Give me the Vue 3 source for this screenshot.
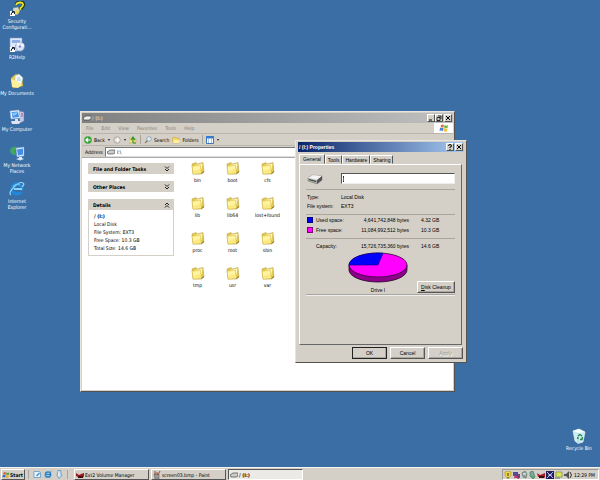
<script setup>
import { onMounted, ref } from 'vue'

const shortcuts = [
  { id: 'security', label: 'Security Configurati...' },
  { id: 'help', label: 'R2Help' },
  { id: 'documents', label: 'My Documents' },
  { id: 'computer', label: 'My Computer' },
  { id: 'network', label: 'My Network Places' },
  { id: 'ie', label: 'Internet Explorer' },
]
const menus = ['File', 'Edit', 'View', 'Favorites', 'Tools', 'Help']
const folders = ['bin', 'boot', 'cfs', 'lib', 'lib64', 'lost+found', 'proc', 'root', 'sbin', 'tmp', 'usr', 'var']
const facts = ['Local Disk', 'File System: EXT3', 'Free Space: 10.3 GB', 'Total Size: 14.6 GB']
const tabs = ['General', 'Tools', 'Hardware', 'Sharing']
const activeTab = ref('General')
const address = ref('I:\\')
const volume = ref('/')
const volumeInput = ref(null)

onMounted(() => {
  volumeInput.value.focus()
  volumeInput.value.select()
})
</script>

<template>
  <div class="screen">
    <main class="desktop">
      <nav class="shortcuts" aria-label="Desktop">
        <a v-for="s in shortcuts" :key="s.id" href="#" class="shortcut">
          <svg class="big" viewBox="0 0 16 16" aria-hidden="true">
            <g v-if="s.id === 'security'">
              <path d="M7 4Q8 1 11 1Q15 1 14.500 4Q14 6 12 7V9" fill="none" stroke="#24350a" stroke-width="3.200" />
              <path d="M7 4Q8 1.500 11 1.500Q14.500 1.500 14 4Q13.500 6 11.500 7V9" fill="none" stroke="#e8e838" stroke-width="1.800" />
              <path d="M4 7L9 6L11 10L8 14L4 13Z" fill="#d8dccb" stroke="#71806b" stroke-width=".5" />
              <circle cx="8" cy="11" r="2" fill="#e6d457" />
              <path d="M1 10H6V15H1Z" fill="#fff" /><path d="M2 14Q2 11 5 11M3 10.500H5.500V13" fill="none" stroke="#123" />
            </g>
            <g v-else-if="s.id === 'help'">
              <path d="M1 1H13V14H1Z" fill="#dce8fa" stroke="#7f9ed0" stroke-width=".6" />
              <path d="M3 3H11V6H3Z" fill="#8fb0e4" />
              <circle cx="11" cy="9.500" r="4.500" fill="#dde6f6" stroke="#8196bd" stroke-width=".7" />
              <path d="M8 6L11 9L15 8" fill="none" stroke="#fff" stroke-width="1.500" /><circle cx="11" cy="9.500" r="1.200" fill="#7b8bcc" />
              <path d="M1 10H6V15H1Z" fill="#fff" /><path d="M2 14Q2 11 5 11M3 10.500H5.500V13" fill="none" stroke="#123" />
            </g>
            <g v-else-if="s.id === 'documents'">
              <path d="M2 5L7 1L13 4L14 13L4 15Z" fill="#e8cc55" stroke="#a5943e" stroke-width=".5" />
              <path d="M6 3L10 1L14 5L12 12L6 10Z" fill="#f4faff" stroke="#9cb5be" stroke-width=".4" />
              <path d="M2 6L8 8L13 12L9 15L3 14Z" fill="#fff09b" /><path d="M8 5H11M8 7H12" stroke="#69b7c9" stroke-width=".7" />
            </g>
            <g v-else-if="s.id === 'computer'">
              <path d="M10 2L15 3V12L11 14Z" fill="#c5c9df" stroke="#6e75a4" stroke-width=".5" />
              <path d="M1 2L10 1L11 9L2 10Z" fill="#eef4ff" stroke="#8eaddb" stroke-width=".5" />
              <path d="M2.500 3L9 2.500L10 8L3.500 8.700Z" fill="#4290e4" /><path d="M3 4L9 3L7 6L4 7Z" fill="#83c6ff" />
              <path d="M6 10H9V12H12L10 15H3L2 12H6Z" fill="#dce4f1" /><path d="M12 5L14 5M12 7H14" stroke="#a84f9b" />
            </g>
            <g v-else-if="s.id === 'network'">
              <circle cx="6" cy="6" r="5" fill="#3178bc" /><path d="M1.500 4Q5 0 8 3L6 6L7 10Q2 10 1 6Z" fill="#43a65c" />
              <path d="M7 3L15 2V11L8 12Z" fill="#e2efff" stroke="#7597cc" stroke-width=".5" /><path d="M8 4.500L14 3.500V9.500L9 10.500Z" fill="#438fe4" />
              <path d="M10 12H13V13L15 14L11 15.500L7 14L10 13Z" fill="#dce7f6" />
            </g>
            <g v-else>
              <circle cx="8" cy="8" r="5" fill="none" stroke="#2386d9" stroke-width="3.400" />
              <path d="M5 8H13" stroke="#83d5ff" stroke-width="2" /><path d="M11 9.500H15V11H10Z" fill="#3a6ea5" />
              <path d="M2 14Q-1 12 5 6T14 2Q16 3 13 6" fill="none" stroke="#90d9fa" stroke-width="1.200" />
              <path d="M4 5Q7 2 11 4" fill="none" stroke="#79c9f5" />
            </g>
          </svg>
          <span>{{ s.label }}</span>
        </a>
      </nav>

      <a href="#" class="shortcut bin">
        <svg class="big" viewBox="0 0 16 16" aria-hidden="true">
          <path d="M2 3L8 1L14 4L12 14L7 15.500L4 13Z" fill="#cdebf0" stroke="#e8ffff" stroke-width=".6" />
          <path d="M2 3L8 5L14 4L8 1Z" fill="#f4ffff" /><path d="M8 5L7 15" stroke="#8fb9cf" stroke-width=".5" />
          <path d="M7 8L9 6.500L11 8M11.500 9L11 11.500H9M7 9L6.500 11" fill="none" stroke="#21894a" stroke-width="1.400" />
        </svg>
        <span>Recycle Bin</span>
      </a>

      <section class="window explorer" aria-label="Drive I">
        <header class="titlebar inactive">
          <svg class="mini" viewBox="0 0 8 8"><path d="M0 4L3 2H8V5L6 6H1Z" fill="#eee" stroke="#333" stroke-width=".6" /></svg>
          <h2>/ (I:)</h2>
          <div class="controls">
            <button aria-label="Minimize"><svg viewBox="0 0 6 6"><path d="M1 5H4" stroke="#000" /></svg></button>
            <button aria-label="Restore"><svg viewBox="0 0 6 6"><path d="M2 1H5V4M1 2.500H4V5.500H1Z" fill="none" stroke="#000" stroke-width=".8" /></svg></button>
            <button aria-label="Close" class="apart"><svg viewBox="0 0 6 6"><path d="M1 1L5 5M5 1L1 5" stroke="#000" /></svg></button>
          </div>
        </header>
        <div class="menubar">
          <button v-for="m in menus" :key="m">{{ m }}</button>
          <div class="brand">
            <svg viewBox="0 0 10 8" aria-hidden="true">
              <path d="M2 1Q4 0 5 1L4.500 3.500Q3 3 1.500 3.500Z" fill="#ef6c3c" /><path d="M5.500 1Q7 2 9 1L8.500 4Q6.500 4.500 5 3.500Z" fill="#73b84b" />
              <path d="M1 4Q3 3.500 4.500 4L4 7Q2 6 .5 7Z" fill="#4c82da" /><path d="M5 4Q7 5 8.500 4.500L8 7.500Q6 8 4.500 7Z" fill="#edc43b" />
            </svg>
          </div>
        </div>
        <div class="toolbar">
          <button class="back"><svg class="tool" viewBox="0 0 8 8"><circle cx="4" cy="4" r="3.800" fill="#36a238" /><path d="M6.500 4H2M4 2L2 4L4 6" fill="none" stroke="#fff" stroke-width="1.200" /></svg>Back</button>
          <i class="caret"></i>
          <button aria-label="Forward"><svg class="tool" viewBox="0 0 8 8"><circle cx="4" cy="4" r="3.300" fill="#d4d0c8" stroke="#a7a7a1" stroke-width=".8" /><path d="M2 4H6M4 2L6 4L4 6" fill="none" stroke="#fff" stroke-width="1.200" /></svg></button>
          <i class="caret"></i>
          <button aria-label="Up"><svg class="tool" viewBox="0 0 8 8"><path d="M0 2H3L4 3H7V7H0Z" fill="#f1e07a" stroke="#b6a13f" stroke-width=".5" /><path d="M4 7V2M2 4L4 1L6 4M4 7H7" fill="none" stroke="#2f9634" stroke-width="1.200" /></svg></button>
          <i class="rule"></i>
          <button><svg class="tool" viewBox="0 0 8 8"><circle cx="5" cy="3" r="2.300" fill="#d8f0fa" stroke="#8c9dac" stroke-width=".8" /><path d="M3.500 4.500L1 7" stroke="#937b58" stroke-width="1.300" /></svg>Search</button>
          <button><svg class="tool" viewBox="0 0 8 8"><path d="M0 2L3 1L4 2H7V7H1Z" fill="#f3d568" stroke="#bd9d3d" stroke-width=".5" /><path d="M2 4H8L7 7H1Z" fill="#fff0a0" /></svg>Folders</button>
          <i class="rule"></i>
          <button aria-label="Views" class="views"><svg class="tool" viewBox="0 0 8 8"><path d="M.5 .5H7.500V7.500H.5Z" fill="#fff" stroke="#3d77ba" /><path d="M0 1.500H8" stroke="#347bd0" stroke-width="2" /><path d="M2 4H3M5 4H6M2 6H3M5 6H6" stroke="#498ccd" /></svg></button>
          <i class="caret"></i>
        </div>
        <div class="address">
          <label for="address">Address</label>
          <div class="field">
            <svg class="mini" viewBox="0 0 8 8"><path d="M0 4L3 2H8V5L6 6H1Z" fill="#ccc" stroke="#333" stroke-width=".6" /></svg>
            <input id="address" v-model="address" />
          </div>
        </div>
        <div class="body">
          <aside>
            <section v-for="t in ['File and Folder Tasks', 'Other Places', 'Details']" :key="t" class="task">
              <h3>{{ t }}
                <svg viewBox="0 0 6 6" aria-hidden="true"><path :d="t === 'Details' ? 'M1 3L3 1L5 3M1 5.500L3 3.500L5 5.500' : 'M1 .5L3 2.500L5 .5M1 3L3 5L5 3'" fill="none" stroke="#111" stroke-width=".9" /></svg>
              </h3>
              <div v-if="t === 'Details'" class="details">
                <strong>/ (I:)</strong>
                <p v-for="f in facts" :key="f">{{ f }}</p>
              </div>
            </section>
          </aside>
          <div class="files">
            <a v-for="f in folders" :key="f" href="#" class="folder">
              <svg viewBox="0 0 14 14" aria-hidden="true">
                <path d="M1 3L5 1.500L6.500 3L12 1.500L13 11L10.500 13H2Z" fill="#e3c750" stroke="#b39a3b" stroke-width=".5" />
                <path d="M4 4L11.500 2.500L10.500 9L4 10Z" fill="#fff8ca" />
                <path d="M1 5L9.500 4L10.500 12.500L2 13.300Z" fill="#fbe981" stroke="#c5a93e" stroke-width=".4" />
                <path d="M2 6L9 5V8L2 10Z" fill="#fff4a2" /><path d="M10.500 12.500L13 10.500" stroke="#806f2c" />
              </svg>
              <span>{{ f }}</span>
            </a>
          </div>
        </div>
      </section>

      <section class="window dialog" role="dialog" aria-label="Properties">
        <header class="titlebar">
          <h2>/ (I:) Properties</h2>
          <div class="controls">
            <button aria-label="Help"><svg viewBox="0 0 6 6"><path d="M1.500 2Q1.500 .5 3 .5T4.500 2Q4.500 3 3 3V4M3 5V6" fill="none" stroke="#000" /></svg></button>
            <button aria-label="Close" class="apart"><svg viewBox="0 0 6 6"><path d="M1 1L5 5M5 1L1 5" stroke="#000" /></svg></button>
          </div>
        </header>
        <div class="tabs" role="tablist">
          <button v-for="t in tabs" :key="t" role="tab" :aria-selected="t === activeTab" :class="{ active: t === activeTab }" @click="activeTab = t">{{ t }}</button>
        </div>
        <div class="panel" role="tabpanel">
          <div class="name">
            <svg viewBox="0 0 16 12" aria-hidden="true">
              <path d="M1 5L6 2L15 3V7L10 11L1 8Z" fill="#aaa" stroke="#777" stroke-width=".5" /><path d="M1 5L6 2L15 3L10 7Z" fill="#f3f3f3" />
              <path d="M10 7L15 3V7L10 11Z" fill="#555" /><path d="M2 6.500L9 8.500" stroke="#444" stroke-width="1.200" /><path d="M2 8L4 8.500" stroke="#63b85b" />
            </svg>
            <input ref="volumeInput" v-model="volume" aria-label="Volume label" />
          </div>
          <dl>
            <dt>Type:</dt><dd>Local Disk</dd>
            <dt>File system:</dt><dd>EXT3</dd>
          </dl>
          <table>
            <tbody>
              <tr><th scope="row"><i class="swatch used"></i>Used space:</th><td>4,641,742,848 bytes</td><td>4.32 GB</td></tr>
              <tr><th scope="row"><i class="swatch free"></i>Free space:</th><td>11,084,992,512 bytes</td><td>10.3 GB</td></tr>
            </tbody>
            <tbody class="total">
              <tr><th scope="row"><i class="swatch"></i>Capacity:</th><td>15,726,735,360 bytes</td><td>14.6 GB</td></tr>
            </tbody>
          </table>
          <div class="chart">
            <figure>
              <svg viewBox="0 0 60 32" role="img" aria-label="Used and free space">
                <path d="M1 13V18A29 12 0 0 0 59 18V13Z" fill="#8c008c" stroke="#210021" stroke-width=".8" />
                <ellipse cx="30" cy="13" rx="29" ry="12" fill="#f0f" stroke="#310031" stroke-width=".8" />
                <path d="M30 13H1A29 12 0 0 1 35 1.200Z" fill="#00f" stroke="#000080" stroke-width=".6" />
              </svg>
              <figcaption>Drive I</figcaption>
            </figure>
            <button class="push"><u>D</u>isk Cleanup</button>
          </div>
          <hr />
        </div>
        <footer>
          <button class="push default">OK</button>
          <button class="push">Cancel</button>
          <button class="push" disabled>Apply</button>
        </footer>
      </section>
    </main>

    <footer class="taskbar">
      <button class="start">
        <svg viewBox="0 0 10 8" aria-hidden="true"><path d="M2 1Q4 0 5 1L4.500 3.500L1.500 3.500Z" fill="#e44d30" /><path d="M5.500 1Q7 2 9 1L8.500 4L5 3.500Z" fill="#4ca43b" /><path d="M1 4L4.500 4L4 7Q2 6 .5 7Z" fill="#356bd4" /><path d="M5 4L8.500 4.500L8 7.500Q6 8 4.500 7Z" fill="#e5b52e" /></svg>
        Start
      </button>
      <div class="quick">
        <button aria-label="Show Desktop"><svg viewBox="0 0 8 8"><path d="M1 1H6L7.500 2V7H1Z" fill="#eaf7ff" stroke="#578ebd" stroke-width=".7" /><path d="M3 5L6 2L7 3L4 6Z" fill="#3f91ce" /></svg></button>
        <button aria-label="Internet Explorer"><svg viewBox="0 0 8 8"><circle cx="4" cy="4" r="2.600" fill="none" stroke="#257fcb" stroke-width="1.500" /><path d="M2 4H6.500" stroke="#257fcb" stroke-width="1.200" /><path d="M1 7Q0 5 4 2T8 2" fill="none" stroke="#62aee3" stroke-width=".7" /></svg></button>
        <button aria-label="Desktop tools"><svg viewBox="0 0 8 8"><path d="M3 0H6V3L7 5L4 8L2 5Z" fill="#b7d6ee" stroke="#587da3" stroke-width=".6" /><path d="M4 1V6" stroke="#fff" /></svg></button>
      </div>
      <nav class="tasks" aria-label="Running programs">
        <button><svg viewBox="0 0 8 8"><path d="M0 2L3 4L5 3L8 2V6L5 5L2 6L0 5Z" fill="#a21a21" /><path d="M2 5H7V7H2Z" fill="#411" /></svg>Ext2 Volume Manager</button>
        <button><svg viewBox="0 0 8 8"><path d="M1 3H6V8H2Z" fill="#9b9995" stroke="#555" stroke-width=".5" /><path d="M2 4V0M4 4V1M5 4L7 0" stroke="#96543b" /></svg>screen03.bmp - Paint</button>
        <button class="pressed"><svg viewBox="0 0 8 8"><path d="M0 4L3 2H8V5L6 6H1Z" fill="#ccc" stroke="#333" stroke-width=".6" /></svg>/ (I:)</button>
      </nav>
      <div class="tray">
        <svg viewBox="0 0 68 8" aria-hidden="true">
          <path d="M1 1L4 0L7 1Q8 5 4 8Q0 5 1 1Z" fill="#f2d739" stroke="#8b7b2b" stroke-width=".5" /><path d="M4 2V5M4 6V7" stroke="#333" />
          <path d="M9 1H14V5H9ZM12 3H16V7H12Z" fill="#554d94" /><path d="M9 4L15 8M15 4L10 7" stroke="#bd285a" />
          <path d="M18 2L21 0L23 3L22 7L19 6Z" fill="#93a5a2" stroke="#526360" stroke-width=".6" /><path d="M19 3H22" stroke="#fff" />
          <path d="M26 1L29 0L31 6L29 8L26 5Z" fill="#7baba0" stroke="#386c5d" stroke-width=".6" /><path d="M27 5L31 7" stroke="#40a443" />
          <path d="M33 2L36 4L41 2V7L38 5L34 6Z" fill="#a51e25" /><path d="M35 5H40V7H35Z" fill="#311" />
          <path d="M42 0H50V8H42Z" fill="#20205f" /><path d="M43 1L49 7M49 1L43 7M44 4H48" stroke="#d7dcff" stroke-width=".8" />
          <path d="M52 1H58V6H52Z" fill="#d7e65b" stroke="#697d38" stroke-width=".6" /><path d="M51 6H56V8H51Z" fill="#999" />
          <path d="M60 3H62L65 0V8L62 5H60Z" fill="#555" /><path d="M66 1Q69 4 66 7" fill="none" stroke="#333" />
        </svg>
        <time>12:29 PM</time>
      </div>
    </footer>
  </div>
</template>

<style>
body { margin: 0; background: #3a6ea5; }
</style>

<style scoped>
* { box-sizing: border-box; }
.screen {
  display: flex; flex-direction: column; min-height: 100vh;
  font: 5px/6px "DejaVu Sans Condensed", "Liberation Sans", sans-serif; color: #000; background: #3a6ea5;
}
button, input { font: inherit; color: inherit; border: 0; padding: 0; margin: 0; background: none; border-radius: 0; }
input { min-width: 0; outline: 0; }
input::selection { color: #fff; background: #0a246a; }
a { color: inherit; text-decoration: none; }
h2, h3, p, dl, dd, figure { margin: 0; font-size: inherit; }
svg { display: block; flex: none; }
.desktop { position: relative; flex: 1; overflow: hidden; }
.shortcuts { display: grid; grid-auto-rows: 36px; justify-content: start; }
.shortcut { display: flex; flex-direction: column; align-items: center; gap: 1px; width: 34px; padding-top: 1px; color: #fff; text-align: center; }
.shortcut span { display: flex; justify-content: center; width: 40px; padding: 0 3px; }
.big { width: 16px; height: 16px; }
.bin { position: absolute; right: 4px; bottom: 16px; }
.bin span, .shortcut:nth-child(3) span, .shortcut:nth-child(4) span { white-space: nowrap; }

.window { position: absolute; display: flex; flex-direction: column; padding: 1px; background: #d4d0c8; border: 1px solid; border-color: #e8e5df #55534f #55534f #e8e5df; }
.explorer { left: 80px; top: 111px; width: 375px; height: 281px; }
.dialog { left: 295px; top: 140px; width: 172px; height: 223px; }
.titlebar { display: flex; align-items: center; gap: 1px; height: 10px; flex: none; padding: 0 1px; color: #fff; background: linear-gradient(90deg, #0a246a, #a6caf0); }
.inactive { color: #d4d0c8; background: linear-gradient(90deg, #808080, #c0c0c0); }
.mini { width: 8px; height: 8px; }
.controls { display: flex; margin-left: auto; }
.controls button { width: 8px; height: 8px; background: #d4d0c8; border: 1px solid; border-color: #fff #555 #555 #fff; }
.controls svg { width: 6px; height: 6px; }
.apart { margin-left: 1px; }
.menubar { display: flex; align-items: center; gap: 8px; height: 11px; flex: none; padding-left: 4px; color: #85827c; border-bottom: 1px solid #b9b5ad; }
.brand { display: flex; align-items: center; justify-content: center; width: 19px; height: 10px; margin-left: auto; background: #fff; }
.brand svg { width: 10px; height: 8px; }
.toolbar { display: flex; align-items: center; gap: 3px; height: 12px; flex: none; padding-left: 2px; border-bottom: 1px solid #bab6ae; }
.toolbar button { display: flex; align-items: center; gap: 2px; }
.tool { width: 8px; height: 8px; }
.caret { border: 1px solid transparent; border-top: 2px solid #222; border-bottom: 0; }
.rule { width: 1px; height: 9px; background: #aaa69e; }
.address { display: flex; align-items: center; gap: 2px; height: 11px; flex: none; padding-left: 3px; }
.field { display: flex; align-items: center; flex: 1; gap: 2px; height: 10px; padding-left: 1px; background: #fff; border: 1px solid #777; border-right-color: #ddd; border-bottom-color: #ddd; }
.field input { flex: 1; }
.body { display: flex; flex: 1; background: #fff; border-top: 1px solid #aaa; }
aside { display: flex; flex-direction: column; gap: 7px; width: 92px; padding: 5px 0 0 6px; }
.task h3 { display: flex; align-items: center; justify-content: space-between; height: 11px; padding: 0 4px 0 5px; background: #d4d0c8; }
.task h3 svg { width: 6px; height: 6px; }
.details { padding: 3px 5px; border: 1px solid #d4d0c8; border-top: 0; line-height: 8px; }
.details strong { display: block; line-height: 7px; }
.files { display: grid; grid-template-columns: repeat(3, 35px); grid-auto-rows: 35px; padding: 3px 0 0 6px; }
.folder { display: flex; flex-direction: column; align-items: center; gap: 2px; }
.folder svg { width: 14px; height: 14px; }

.dialog { padding: 1px 2px 2px; font-family: "Liberation Sans", Arial, sans-serif; }
.tabs { display: flex; align-items: flex-end; height: 12px; flex: none; padding-left: 1px; }
.tabs button { height: 9px; padding: 0 2px; border: 1px solid; border-color: #fff #555 transparent #fff; border-radius: 1px 1px 0 0; }
.tabs .active { height: 10px; padding: 0 3px; }
.panel { display: flex; flex-direction: column; flex: 1; margin: 0 2px 0 1px; padding: 7px 6px 0; border: 1px solid; border-color: #fff #666 #666 #fff; }
.name { display: flex; align-items: center; gap: 18px; height: 13px; padding-left: 1px; }
.name svg { width: 16px; height: 12px; }
.name input { flex: 1; height: 11px; padding-left: 1px; background: #fff; border: 1px solid; border-color: #555 #eee #eee #555; }
dl { display: grid; grid-template-columns: 34px 1fr; row-gap: 3px; margin-top: 4px; padding: 4px 1px 5px; border-top: 1px solid #aaa69e; }
table { width: 100%; table-layout: fixed; border-collapse: collapse; border-top: 1px solid #aaa69e; }
th { width: 45px; padding: 2px 0 2px 1px; font-weight: normal; text-align: left; white-space: nowrap; }
td { padding: 2px 0; text-align: right; white-space: nowrap; }
td:last-child { width: 46px; padding-left: 12px; text-align: left; }
.swatch { display: inline-block; width: 6px; height: 6px; margin-right: 3px; vertical-align: top; }
.used { background: #00f; border: 1px solid #000080; }
.free { background: #f0f; border: 1px solid #800080; }
tbody:first-child tr:last-child > * { padding-bottom: 5px; }
.total { border-top: 1px solid #aaa69e; }
.total th, .total td { padding-top: 4px; }
.chart { display: flex; align-items: flex-end; justify-content: space-between; margin-top: 1px; padding-left: 42px; }
figure { text-align: center; }
figure svg { width: 60px; height: 32px; margin-bottom: 3px; }
.chart .push { width: 38px; }
hr { width: 100%; margin: 1px 0 0; border: 0; border-top: 1px solid #aaa69e; border-bottom: 1px solid #eee; }
.push { height: 12px; text-align: center; background: #d4d0c8; border: 1px solid; border-color: #fff #555 #555 #fff; box-shadow: inset -1px -1px #aaa69e; }
.push:disabled { color: #96938c; text-shadow: 1px 1px #fff; }
.dialog footer { display: flex; justify-content: flex-end; gap: 3px; padding: 2px 1px 1px; }
.dialog footer .push { width: 35px; }
.dialog footer .default { border-color: #222; }

.taskbar { display: flex; align-items: center; height: 13px; padding: 1px 1px 0; background: #d4d0c8; border-top: 1px solid #f5f3ee; }
.start { display: flex; align-items: center; width: 24px; height: 11px; font-weight: bold; border: 1px solid; border-color: #fff #555 #555 #fff; }
.start svg { width: 8px; height: 8px; }
.quick { display: flex; gap: 3px; margin-left: 3px; padding: 0 4px; border: solid #aaa69e; border-width: 0 1px; }
.quick svg { width: 8px; height: 9px; }
.tasks { display: flex; flex: 1; gap: 2px; margin-left: 6px; }
.tasks button { display: flex; align-items: center; gap: 1px; width: 75px; height: 11px; padding-left: 1px; white-space: nowrap; border: 1px solid; border-color: #fff #555 #555 #fff; }
.tasks svg { width: 8px; height: 8px; }
.tasks .pressed { font-weight: bold; background: #eceae6; border-color: #555 #fff #fff #555; }
.tray { display: flex; align-items: center; gap: 2px; height: 11px; padding: 0 3px 0 1px; border: 1px solid; border-color: #999 #fff #fff #999; }
.tray svg { width: 68px; height: 8px; }
</style>
